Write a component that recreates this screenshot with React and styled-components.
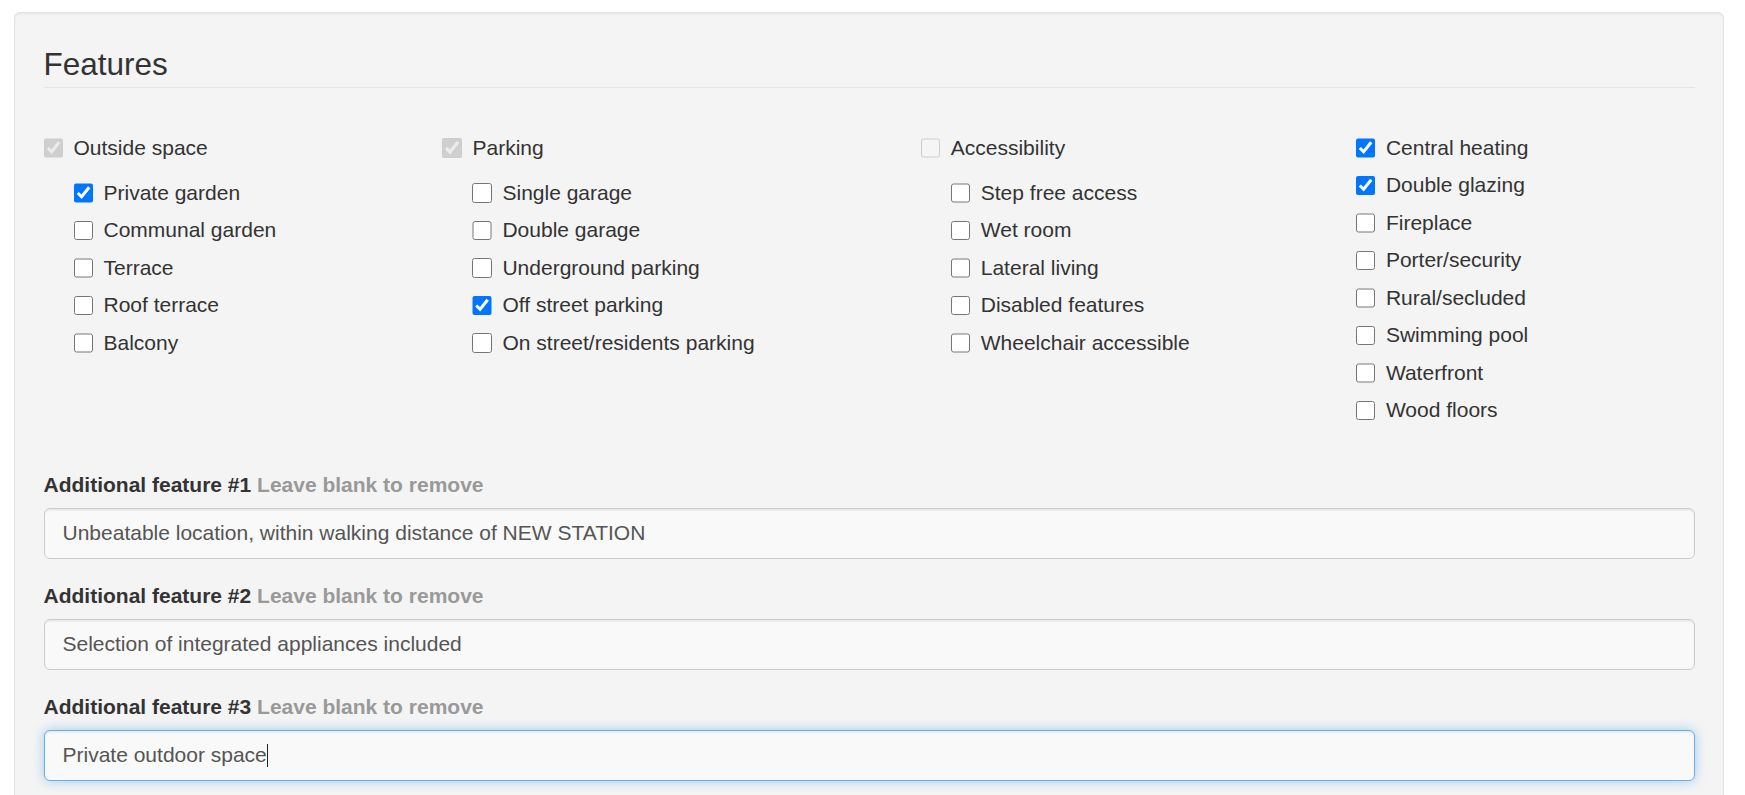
import React, { useEffect, useRef } from "react";
import styled, { createGlobalStyle, css } from "styled-components";

const GlobalStyle = createGlobalStyle`
  html, body { margin: 0; padding: 0; background: #fff; }
  body {
    font-family: "Liberation Sans", Arial, Helvetica, sans-serif;
    font-size: 21px;
    line-height: 30px;
    color: #333;
  }
  * { box-sizing: border-box; }
`;

const Page = styled.div`
  padding: 12px 21px 0 14px;
`;

const Well = styled.fieldset`
  margin: 0;
  min-height: 820px;
  padding: 28.5px;
  background: #f4f4f4;
  border: 1px solid #e3e3e3;
  border-radius: 6px;
  box-shadow: inset 0 1.5px 1.5px rgba(0, 0, 0, 0.05);
  min-width: 0;
`;

const Legend = styled.div`
  display: block;
  width: 100%;
  font-size: 31.5px;
  line-height: 45px;
  color: #333;
  border-bottom: 1px solid #e5e5e5;
  margin-bottom: 30px;
`;

const Columns = styled.div`
  display: flex;
  margin-bottom: 30px;
`;

const Column = styled.div`
  flex: 1 1 auto;
`;

const SubList = styled.div`
  padding-left: 30px;
`;

const CheckRow = styled.label`
  display: flex;
  align-items: flex-start;
  gap: 10.5px;
  min-height: 30px;
  line-height: 30px;
  margin: 15px 0;
  font-weight: normal;
  color: #333;
  white-space: nowrap;
  cursor: ${(p) => (p.$disabled ? "not-allowed" : "pointer")};

  & + & {
    margin-top: -7.5px;
  }
`;

const Box = styled.input.attrs({ type: "checkbox" })`
  flex: 0 0 auto;
  width: 19.5px;
  height: 19.5px;
  margin: 5.5px 0 0 0;
`;

const FormGroup = styled.div`
  margin-bottom: 22.5px;
`;

const FieldLabel = styled.label`
  display: inline-block;
  margin-bottom: 7.5px;
  font-weight: bold;
  color: #333;
`;

const Hint = styled.span`
  color: #999;
`;

const InputWrap = styled.div`
  position: relative;
`;

const TextInput = styled.input`
  display: block;
  width: 100%;
  height: 51px;
  padding: 9px 18px;
  font-family: inherit;
  font-size: 21px;
  line-height: 30px;
  color: #555;
  background: #f9f9f9;
  border: 1px solid #ccc;
  border-radius: 6px;
  box-shadow: inset 0 1.5px 1.5px rgba(0, 0, 0, 0.075);
  outline: none;
  caret-color: ${(p) => (p.$focused ? "transparent" : "#333")};

  ${(p) =>
    p.$focused &&
    css`
      border-color: #66afe9;
      box-shadow: inset 0 1.5px 1.5px rgba(0, 0, 0, 0.075),
        0 0 12px rgba(102, 175, 233, 0.6);
    `}

  &:focus {
    border-color: #66afe9;
    box-shadow: inset 0 1.5px 1.5px rgba(0, 0, 0, 0.075),
      0 0 12px rgba(102, 175, 233, 0.6);
  }
`;

/* Overlay that mirrors the input text to draw a steady caret after it */
const CaretLayer = styled.div`
  position: absolute;
  inset: 0;
  padding: 10px 19px;
  font-size: 21px;
  line-height: 30px;
  white-space: pre;
  pointer-events: none;
  display: flex;
  align-items: center;
`;

const Ghost = styled.span`
  color: transparent;
`;

const Caret = styled.span`
  display: inline-block;
  width: 1.5px;
  height: 23px;
  background: #222;
`;

const groups = [
  {
    top: { label: "Outside space", checked: true, disabled: true },
    items: [
      { label: "Private garden", checked: true },
      { label: "Communal garden" },
      { label: "Terrace" },
      { label: "Roof terrace" },
      { label: "Balcony" },
    ],
  },
  {
    top: { label: "Parking", checked: true, disabled: true },
    items: [
      { label: "Single garage" },
      { label: "Double garage" },
      { label: "Underground parking" },
      { label: "Off street parking", checked: true },
      { label: "On street/residents parking" },
    ],
  },
  {
    top: { label: "Accessibility", checked: false, disabled: true },
    items: [
      { label: "Step free access" },
      { label: "Wet room" },
      { label: "Lateral living" },
      { label: "Disabled features" },
      { label: "Wheelchair accessible" },
    ],
  },
  {
    top: null,
    items: [
      { label: "Central heating", checked: true },
      { label: "Double glazing", checked: true },
      { label: "Fireplace" },
      { label: "Porter/security" },
      { label: "Rural/secluded" },
      { label: "Swimming pool" },
      { label: "Waterfront" },
      { label: "Wood floors" },
    ],
  },
];

const extras = [
  "Unbeatable location, within walking distance of NEW STATION",
  "Selection of integrated appliances included",
  "Private outdoor space",
];

function Check({ label, checked, disabled }) {
  return (
    <CheckRow $disabled={disabled}>
      <Box defaultChecked={!!checked} disabled={!!disabled} />
      <span>{label}</span>
    </CheckRow>
  );
}

export default function App() {
  const focusRef = useRef(null);

  useEffect(() => {
    const el = focusRef.current;
    if (el) {
      el.focus();
      const n = el.value.length;
      el.setSelectionRange(n, n);
    }
  }, []);

  return (
    <>
      <GlobalStyle />
      <Page>
        <Well>
          <Legend>Features</Legend>
          <Columns>
            {groups.map((g, gi) => (
              <Column key={gi}>
                {g.top ? (
                  <>
                    <Check {...g.top} />
                    <SubList>
                      {g.items.map((it) => (
                        <Check key={it.label} {...it} />
                      ))}
                    </SubList>
                  </>
                ) : (
                  g.items.map((it) => <Check key={it.label} {...it} />)
                )}
              </Column>
            ))}
          </Columns>
          {extras.map((value, i) => {
            const last = i === extras.length - 1;
            return (
              <FormGroup key={i}>
                <FieldLabel htmlFor={`extra-${i + 1}`}>
                  Additional feature #{i + 1} <Hint>Leave blank to remove</Hint>
                </FieldLabel>
                <InputWrap>
                  <TextInput
                    id={`extra-${i + 1}`}
                    type="text"
                    defaultValue={value}
                    $focused={last}
                    ref={last ? focusRef : undefined}
                  />
                  {last && (
                    <CaretLayer aria-hidden="true">
                      <Ghost>{value}</Ghost>
                      <Caret />
                    </CaretLayer>
                  )}
                </InputWrap>
              </FormGroup>
            );
          })}
        </Well>
      </Page>
    </>
  );
}
